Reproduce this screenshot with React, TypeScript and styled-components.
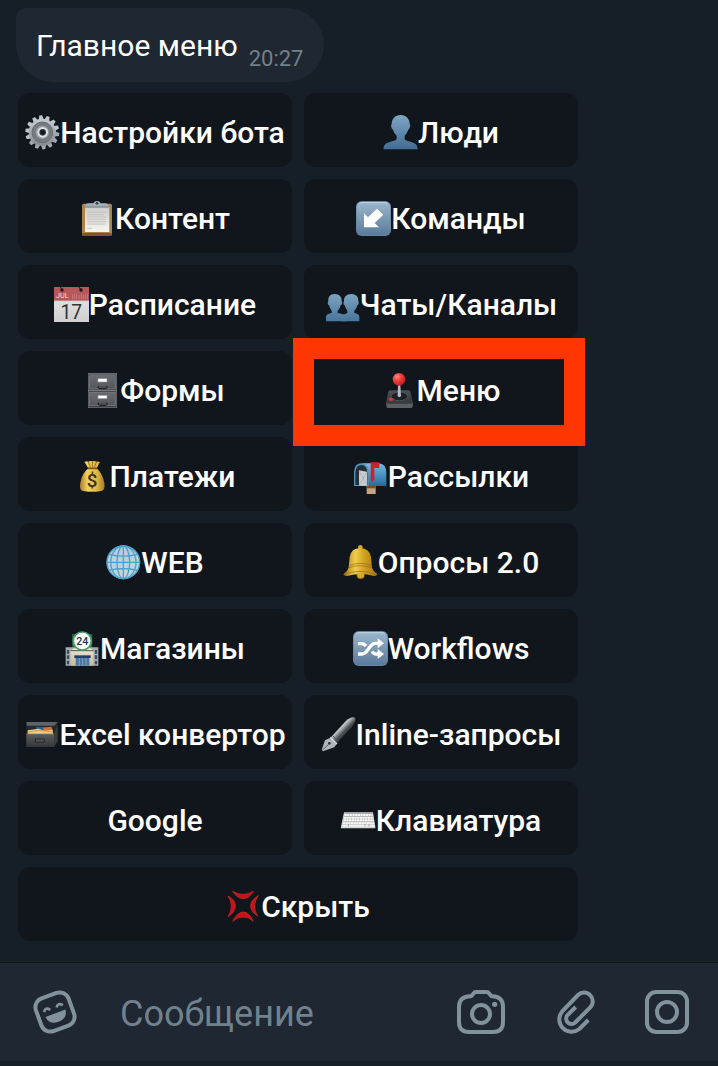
import React from 'react';
import styled, { createGlobalStyle } from 'styled-components';

const GlobalStyle = createGlobalStyle`
  *, *::before, *::after { box-sizing: border-box; }
  body {
    margin: 0;
    background: #161e27;
    font-family: Roboto, "Noto Sans", sans-serif;
    color: #fff;
  }
  button, input { font: inherit; color: inherit; }
`;

const Page = styled.div`
  min-height: 100vh;
  display: flex;
  flex-direction: column;
  padding-bottom: 5px;
`;

const Chat = styled.main`
  flex: 1;
  padding: 8px 16px 21px;
`;

const Bubble = styled.div`
  display: inline-flex;
  align-items: flex-end;
  gap: 11px;
  min-height: 74px;
  padding: 20px 21px 10px 20px;
  background: #1e2732;
  border-radius: 10px 37px 37px 37px;
  vertical-align: top;
`;

const Message = styled.p`
  margin: 0;
  align-self: flex-start;
  font-size: 30px;
  line-height: 36px;
`;

const Time = styled.time`
  font-size: 22px;
  line-height: 26px;
  color: #72808b;
`;

const Keyboard = styled.div`
  display: grid;
  grid-template-columns: 1fr 1fr;
  gap: 12px;
  max-width: 560px;
  margin: 11px 0 0 2px;
`;

const Cell = styled.div<{ $wide?: boolean }>`
  position: relative;
  grid-column: ${(p) => (p.$wide ? '1 / -1' : 'auto')};
`;

const Key = styled.button`
  display: flex;
  align-items: center;
  justify-content: center;
  width: 100%;
  height: 74px;
  padding: 4px 0 0;
  border: 0;
  border-radius: 12px;
  background: #11161c;
  font-size: 30px;
  font-weight: 500;
  line-height: 36px;
  white-space: nowrap;
  cursor: pointer;
`;

const Label = styled.span`
  padding-top: 2px;
`;

const Highlight = styled.div`
  position: absolute;
  z-index: 1;
  inset: -13px -7px -21px -11px;
  border: 21px solid #ff3502;
  pointer-events: none;
`;

const Emoji = styled.svg`
  flex: none;
  width: 35px;
  height: 35px;
`;

const Composer = styled.form`
  display: flex;
  align-items: center;
  gap: 43px;
  height: 99px;
  padding: 0 29px 0 33px;
  border-top: 1px solid #10161d;
  background: #1e2732;
`;

const Field = styled.input`
  flex: 1;
  min-width: 0;
  height: 48px;
  padding: 4px 0 0;
  border: 0;
  outline: 0;
  background: none;
  font-size: 36px;
  &::placeholder { color: #71828d; opacity: 1; }
`;

const Tools = styled.div`
  display: flex;
  gap: 48px;
`;

const ToolButton = styled.button`
  display: flex;
  padding: 0;
  border: 0;
  background: none;
  color: #82929d;
  cursor: pointer;
`;

const ToolIcon = styled.svg<{ $wide?: boolean }>`
  width: ${(p) => (p.$wide ? 48 : 44)}px;
  height: 44px;
  fill: none;
  stroke: currentColor;
  stroke-width: 12;
`;

const Fade = ({ id, from, to }: { id: string; from: string; to: string }) => (
  <linearGradient id={id} x1="0" y1="0" x2="0" y2="1">
    <stop offset="0" stopColor={from} />
    <stop offset="1" stopColor={to} />
  </linearGradient>
);

const Gear = () => (
  <>
    <defs><Fade id="gear" from="#c5ccd1" to="#84898e" /></defs>
    {Array.from({ length: 14 }, (_, i) => (
      <path key={i} d="M45 14 L48 1 H57 L60 14Z" fill={i > 3 && i < 10 ? '#a3a9ad' : '#bcc6cc'} transform={`rotate(${(i * 360) / 14 - 6} 52 52)`} />
    ))}
    <circle cx="52" cy="52" r="41" fill="url(#gear)" />
    <circle cx="52" cy="52" r="31" fill="#777d82" stroke="#656b70" strokeWidth="3" />
    <circle cx="52" cy="52" r="22" fill="#979da1" stroke="#62686c" strokeWidth="2" />
    <circle cx="53" cy="52" r="13" fill="#2b3138" stroke="#dde3e6" strokeWidth="6" />
    <circle cx="53" cy="52" r="6" fill="#11161c" />
  </>
);

const Person = () => (
  <>
    <defs><Fade id="person" from="#7fa6c4" to="#426c93" /></defs>
    <path d="M53 0C70 0 80 12 80 27q3 3 1 9-2 7-5 8-4 12-11 18v9q0 4 7 6 18 5 25 9 7 5 7 17H1q0-12 7-17 7-4 25-9 8-2 8-6v-9q-8-6-11-18-4-1-5-8-2-6 1-9C26 12 36 0 53 0Z" fill="url(#person)" />
  </>
);

const Clipboard = () => (
  <>
    <defs><Fade id="paper" from="#cccccb" to="#f7f5f0" /></defs>
    <rect x="6" y="8" width="90" height="97" rx="5" fill="#ad8247" />
    <path d="M7 96H95V101q0 4-4 4H11q-4 0-4-4Z" fill="#7d562b" />
    <rect x="15" y="18" width="73" height="75" fill="url(#paper)" />
    <path d="M22 34H80M22 41H72M22 48H80M22 55H78M22 62H80M22 69H76M22 82H36" stroke="#b4b4b4" strokeWidth="2" />
    <path d="M14 16q2-9 13-9h13q3-7 11-7t11 7h12q12 0 13 9v3H14Z" fill="#a4aeb9" />
    <path d="M14 18H87" stroke="#737d88" strokeWidth="3" />
    <circle cx="51" cy="7" r="4" fill="#344352" />
  </>
);

const Tile = ({ id }: { id: string }) => (
  <>
    <defs><Fade id={id} from="#9bb7cd" to="#5a7b9b" /></defs>
    <rect width="105" height="105" rx="17" fill="#66839e" />
    <rect x="2" y="3" width="101" height="98" rx="15" fill={`url(#${id})`} />
    <path d="M10 7Q14 5 20 5H85q7 0 10 2" stroke="#c1d4e1" strokeWidth="3" fill="none" />
  </>
);

const DownLeft = () => (
  <>
    <Tile id="tileArrow" />
    <path d="M24 37 36 49 63 23 82 41 56 66 69 79H24Z" fill="#fff" />
  </>
);

const Calendar = () => (
  <>
    <defs><Fade id="sheet" from="#e9e9e9" to="#cfcfcf" /></defs>
    <rect width="105" height="105" fill="url(#sheet)" />
    <path d="M0 0H105V42H0Z" fill="#b6575b" />
    <path d="M0 41H105" stroke="#c9aaac" strokeWidth="2" />
    <text x="6" y="33" fontFamily="Roboto" fontSize="22" fontWeight="400" fill="#f5d9da">JUL</text>
    <path d="M56 21V36M62 21V36M68 20V36M75 24V36M82 20V36M88 24V36M94 20V36M100 20V36" stroke="#cf888b" strokeWidth="2" />
    <circle cx="24" cy="9" r="5" fill="#251519" />
    <circle cx="81" cy="9" r="5" fill="#251519" />
    <path d="M24 9 19-1M81 9 74-1" stroke="#251519" strokeWidth="3" />
    <text x="52" y="95" textAnchor="middle" fontFamily="Roboto" fontSize="58" fontWeight="400" fill="#343434">17</text>
  </>
);

const People = () => (
  <>
    <defs><Fade id="people" from="#7da3c0" to="#47759b" /></defs>
    <path d="M79 21c14 0 22 9 21 22 3 3 1 11-3 12-2 8-5 13-9 16v7q14 3 15 10v15H50V84q8-2 17-6v-7q-5-5-8-16c-4-1-5-9-2-12-1-13 8-22 22-22Z" fill="url(#people)" />
    <path d="M29 21c14 0 22 9 21 22 3 3 1 11-3 12-2 8-5 13-9 16v7q19 3 24 10l2 15H3V88q2-7 17-10v-7q-5-5-8-16c-4-1-5-9-2-12-1-13 5-22 19-22Z" fill="url(#people)" />
  </>
);

const Cabinet = () => (
  <>
    <defs><Fade id="drawer" from="#686c70" to="#54575b" /></defs>
    <rect x="9" y="0" width="87" height="105" fill="#6b6f72" />
    <rect x="11" y="5" width="83" height="98" fill="#3d4145" />
    {[8, 58].map((y) => (
      <g key={y}>
        <rect x="14" y={y} width="77" height="40" fill="url(#drawer)" stroke="#7d8083" strokeWidth="2" />
        <rect x="39" y={y + 9} width="27" height="10" fill="#fff" stroke="#96999c" strokeWidth="2" />
        <path d={`M40 ${y + 31}v5q1 3 5 3H61q4 0 5-3v-5`} fill="#4e5256" stroke="#151719" strokeWidth="3" />
      </g>
    ))}
    <path d="M9 53H96" stroke="#7f8386" strokeWidth="3" />
  </>
);

const Joystick = () => (
  <>
    <defs>
      <Fade id="base" from="#4b5055" to="#2e3236" />
      <radialGradient id="ball" cx=".35" cy=".3" r=".8">
        <stop offset="0" stopColor="#ff8a7e" />
        <stop offset=".4" stopColor="#f33f3a" />
        <stop offset="1" stopColor="#b3141a" />
      </radialGradient>
    </defs>
    <path d="M24 52H79q5 0 7 7l6 27v12q0 7-8 7H21q-8 0-8-7V86l5-27q2-7 6-7Z" fill="url(#base)" />
    <path d="M13 87q1 5 7 5H85q6 0 7-5v11q0 7-8 7H21q-8 0-8-7Z" fill="#5b5f62" />
    <ellipse cx="52" cy="70" rx="25" ry="13" fill="#1d2125" stroke="#5c6165" strokeWidth="2" />
    <path d="M48 36H55L57 70q-5 5-10 0Z" fill="#b9bec0" />
    <circle cx="51" cy="19" r="19" fill="url(#ball)" />
    <ellipse cx="27" cy="79" rx="8" ry="5" fill="#d63530" />
  </>
);

const MoneyBag = () => (
  <>
    <defs>
      <linearGradient id="bag">
        <stop offset="0" stopColor="#a97b21" />
        <stop offset=".3" stopColor="#f1d15e" />
        <stop offset=".7" stopColor="#e1b640" />
        <stop offset="1" stopColor="#a77921" />
      </linearGradient>
    </defs>
    <path d="M28 9q6-4 12-1 6-3 12-1 7-3 12 1 5-2 11 1L65 28q17 15 23 43 5 25-14 26-22 3-45 0-19-2-13-26 5-28 24-43Z" fill="url(#bag)" />
    <path d="M40 9 46 25M52 8V25M64 9 58 25" stroke="#9b7021" strokeWidth="3" />
    <path d="M38 28H67" stroke="#775018" strokeWidth="5" />
    <text x="51" y="85" textAnchor="middle" fontFamily="Roboto" fontSize="56" fontWeight="500" fill="#3a321c">$</text>
  </>
);

const Mailbox = () => (
  <>
    <defs><Fade id="mail" from="#79bbe2" to="#216b9e" /></defs>
    <path d="M41 78H68V105H41Z" fill="#c4a583" />
    <path d="M41 80H68V88H41Z" fill="#6b503b" />
    <path d="M28 13H78q22 3 22 28V81H28Z" fill="url(#mail)" />
    <path d="M3 81V40Q4 13 25 13T47 40V81Z" fill="#5794b9" />
    <path d="M7 78V41Q8 18 25 18T43 41V78Z" fill="#252e36" />
    <path d="M18 34 42 38V80H18Z" fill="#c9cccd" />
    <path d="M18 36 31 57 42 40M18 79 31 57 42 79" fill="none" stroke="#a2a8ab" strokeWidth="2" />
    <path d="M53 10H79V27H64V60q-5 14-11 3Z" fill="#d51e27" />
  </>
);

const Globe = () => (
  <>
    <defs><Fade id="globe" from="#b8cdd8" to="#c9d4da" /></defs>
    <circle cx="52" cy="52" r="50" fill="url(#globe)" />
    <g fill="none" stroke="#4aa2cf" strokeWidth="4">
      <circle cx="52" cy="52" r="49" />
      <ellipse cx="52" cy="52" rx="19" ry="49" />
      <ellipse cx="52" cy="52" rx="38" ry="49" />
      <path d="M52 3V101M3 52H101M9 28Q52 39 95 28M9 76Q52 65 95 76" />
    </g>
  </>
);

const Bell = () => (
  <>
    <defs>
      <linearGradient id="bell">
        <stop offset="0" stopColor="#a66f0d" />
        <stop offset=".35" stopColor="#f0cf4c" />
        <stop offset=".6" stopColor="#d3a321" />
        <stop offset="1" stopColor="#a87710" />
      </linearGradient>
    </defs>
    <circle cx="52" cy="7" r="7" fill="#cfa432" />
    <circle cx="53" cy="91" r="12" fill="#8f640e" />
    <path d="M52 9q28 2 32 27l3 32q3 11 16 20-2 5-10 5-40-12-80 0-9 0-12-5 13-9 16-20l3-32Q23 11 52 9Z" fill="url(#bell)" />
    <path d="M17 68Q52 56 86 68M21 61Q52 49 84 61M2 89Q50 69 102 89" fill="none" stroke="#946910" strokeWidth="2" />
    <ellipse cx="53" cy="91" rx="10" ry="8" fill="#d6ab34" />
  </>
);

const Store = () => (
  <>
    <defs><Fade id="wall" from="#eee8d4" to="#c2b798" /></defs>
    <path d="M21 9H82V53H21Z" fill="#315b3d" />
    <path d="M2 49H100V104H2Z" fill="#a5adb4" />
    <path d="M17 58 28 52H76L85 58V104H17Z" fill="url(#wall)" />
    <path d="M17 59H85" stroke="#5a5144" strokeWidth="3" />
    <path d="M9 57V68M9 73V84M9 89V100M93 57V68M93 73V84M93 89V100" stroke="#3d4b5c" strokeWidth="7" />
    <path d="M28 73H77V81H28Z" fill="#243e6a" />
    <path d="M32 81H73V104H32Z" fill="#4a78a1" />
    <path d="M43 81V104M53 81V104M63 81V104" stroke="#9dbacb" strokeWidth="2" />
    <circle cx="52" cy="30" r="27" fill="#fff" stroke="#43a573" strokeWidth="5" />
    <text x="52" y="41" textAnchor="middle" fontFamily="Roboto" fontSize="32" fontWeight="500" fill="#1d3042">24</text>
  </>
);

const Shuffle = () => (
  <>
    <Tile id="tileShuffle" />
    <path d="M15 38H27Q34 38 39 45M15 69H27q8 0 14-8L53 45q6-8 14-8H77M57 61q5 8 12 8H77" fill="none" stroke="#fff" strokeWidth="10" />
    <path d="M74 22 93 37 74 52ZM74 54 93 69 74 84Z" fill="#fff" />
  </>
);

const Pen = () => (
  <>
    <defs>
      <linearGradient id="barrel" x1="0" y1="0" x2="1" y2="1">
        <stop offset=".2" stopColor="#2b2d30" />
        <stop offset=".42" stopColor="#bec3c8" />
        <stop offset=".55" stopColor="#4a4d50" />
        <stop offset="1" stopColor="#111" />
      </linearGradient>
    </defs>
    <path d="M27 64 74 12Q91-2 102 2q5 9-10 28L46 79Z" fill="url(#barrel)" />
    <path d="M28 62 47 81 40 91 6 103 2 99 12 70Z" fill="#aeb4b9" />
    <path d="M3 101 24 80" stroke="#30363a" strokeWidth="2" />
    <circle cx="25" cy="79" r="4" fill="#303438" />
    <path d="M28 61 48 81" stroke="#d5dade" strokeWidth="4" />
    <path d="M36 57 52 74" stroke="#565b60" strokeWidth="3" />
  </>
);

const CardBox = () => (
  <>
    <defs><Fade id="box" from="#5a5c5d" to="#333638" /></defs>
    <path d="M7 16H101V72L89 90H7Z" fill="#26292b" />
    <path d="M8 15H101L91 26H8Z" fill="#5b6466" />
    <path d="M36 30H82L88 47H36Z" fill="#315f86" />
    <path d="M58 32 82 29 87 44H58Z" fill="#df6b33" />
    <path d="M11 40 44 35 61 41 85 38 88 53H11Z" fill="#f2cb80" />
    <path d="M12 45 45 40 86 45" fill="none" stroke="#c18c45" strokeWidth="2" />
    <path d="M7 51H90V90H7Z" fill="url(#box)" />
    <path d="M90 51 101 26V72L90 90Z" fill="#393d3f" />
    <path d="M34 66H61V75H34Z" fill="#55585a" stroke="#27292b" strokeWidth="3" />
    <path d="M7 51H90" stroke="#7c7d7b" strokeWidth="2" />
  </>
);

const Keys = () => (
  <>
    <path d="M9 28H96L103 71V76H0V71Z" fill="#d5d6d7" />
    <path d="M11 32H95M9 40H96M7 48H98M6 57H99M4 66H101" stroke="#85888a" strokeWidth="2" />
    <path d="M11 36H94M9 44H96M8 52H98M6 61H99" stroke="#fafafa" strokeWidth="6" strokeDasharray="6 2" />
    <path d="M4 68H101" stroke="#f4f4f4" strokeWidth="5" />
    <path d="M22 64V70M72 64V70M84 64V70" stroke="#777a7d" strokeWidth="2" />
  </>
);

const Anger = () => (
  <g fill="#c61318" stroke="#da2a24" strokeWidth="2" strokeLinejoin="round">
    <path d="M20 7Q35 16 52 16T82 7Q70 29 52 29T20 7Z" />
    <path d="M20 97Q35 69 52 69T82 97Q70 84 52 84T20 97Z" />
    <path d="M6 21Q29 33 28 52T6 83Q16 69 16 52T6 21Z" />
    <path d="M97 20Q73 34 74 52T95 81Q86 69 86 52T97 20Z" />
  </g>
);

type Item = { label: string; icon?: React.FC; wide?: boolean; marked?: boolean };

const items: Item[] = [
  { label: 'Настройки бота', icon: Gear },
  { label: 'Люди', icon: Person },
  { label: 'Контент', icon: Clipboard },
  { label: 'Команды', icon: DownLeft },
  { label: 'Расписание', icon: Calendar },
  { label: 'Чаты/Каналы', icon: People },
  { label: 'Формы', icon: Cabinet },
  { label: 'Меню', icon: Joystick, marked: true },
  { label: 'Платежи', icon: MoneyBag },
  { label: 'Рассылки', icon: Mailbox },
  { label: 'WEB', icon: Globe },
  { label: 'Опросы 2.0', icon: Bell },
  { label: 'Магазины', icon: Store },
  { label: 'Workflows', icon: Shuffle },
  { label: 'Excel конвертор', icon: CardBox },
  { label: 'Inline-запросы', icon: Pen },
  { label: 'Google' },
  { label: 'Клавиатура', icon: Keys },
  { label: 'Скрыть', icon: Anger, wide: true },
];

export default function App() {
  return (
    <Page>
      <GlobalStyle />
      <Chat>
        <Bubble>
          <Message>Главное меню</Message>
          <Time dateTime="20:27">20:27</Time>
        </Bubble>
        <Keyboard>
          {items.map(({ label, icon: Icon, wide, marked }) => (
            <Cell key={label} $wide={wide}>
              <Key type="button">
                {Icon && (
                  <Emoji viewBox="0 0 105 105" aria-hidden="true">
                    <Icon />
                  </Emoji>
                )}
                <Label>{label}</Label>
              </Key>
              {marked && <Highlight />}
            </Cell>
          ))}
        </Keyboard>
      </Chat>
      <Composer onSubmit={(e) => e.preventDefault()}>
        <ToolButton type="button" aria-label="Стикеры">
          <ToolIcon viewBox="0 0 132 132">
            <g transform="rotate(-20 66 66)">
              <rect x="14" y="14" width="104" height="104" rx="28" strokeWidth="12" />
              <path d="M35 55q9-14 20 0M75 55q9-14 20 0" strokeWidth="8" />
              <path d="M34 70H98Q95 97 66 97T34 70Z" fill="currentColor" stroke="none" />
            </g>
          </ToolIcon>
        </ToolButton>
        <Field type="text" placeholder="Сообщение" aria-label="Сообщение" />
        <Tools>
          <ToolButton type="button" aria-label="Камера">
            <ToolIcon $wide viewBox="0 0 144 132">
              <path d="M39 19q4 0 6-3l5-6q2-4 7-4H89q5 0 7 4l5 6q2 3 6 3 31 2 31 31V96q0 30-30 30H36Q6 126 6 96V50Q6 21 39 19Z" />
              <circle cx="72" cy="72" r="27" />
              <circle cx="113" cy="43" r="8" fill="currentColor" stroke="none" />
            </ToolIcon>
          </ToolButton>
          <ToolButton type="button" aria-label="Прикрепить файл">
            <ToolIcon viewBox="0 0 132 132">
              <path d="M68 51 43 76A16 16 0 0 0 66 98L111 53A25 25 0 0 0 75 15L27 65A37 37 0 0 0 79 117L106 90" />
            </ToolIcon>
          </ToolButton>
          <ToolButton type="button" aria-label="Видеосообщение">
            <ToolIcon viewBox="0 0 132 132">
              <rect x="6" y="6" width="120" height="120" rx="28" />
              <circle cx="66" cy="66" r="30" />
            </ToolIcon>
          </ToolButton>
        </Tools>
      </Composer>
    </Page>
  );
}
